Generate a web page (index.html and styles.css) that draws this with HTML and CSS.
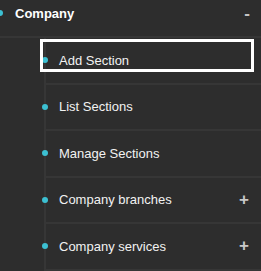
FILE: index.html
```html
<!DOCTYPE html>
<html>
<head>
<meta charset="utf-8">
<link rel="stylesheet" href="styles.css">
</head>
<body>
<nav class="menu">
  <div class="group-head">
    <span class="dot"></span>
    <span class="head-label">Company</span>
    <span class="toggle minus">-</span>
  </div>
  <ul class="sub">
    <li class="item focused"><span class="dot"></span><span class="label">Add Section</span></li>
    <li class="item"><span class="dot"></span><span class="label">List Sections</span></li>
    <li class="item"><span class="dot"></span><span class="label">Manage Sections</span></li>
    <li class="item"><span class="dot"></span><span class="label">Company branches</span><span class="toggle plus">+</span></li>
    <li class="item"><span class="dot"></span><span class="label">Company services</span><span class="toggle plus">+</span></li>
  </ul>
</nav>
</body>
</html>
```
FILE: styles.css
```css
html, body {
  margin: 0;
  padding: 0;
  background: #2d2d2d;
  font-family: "Liberation Sans", Arial, sans-serif;
  overflow: hidden;
}

.menu {
  width: 261px;
}

.dot {
  display: block;
  flex: none;
  width: 6px;
  height: 6px;
  border-radius: 50%;
  background: #3cc0d2;
}

.group-head {
  display: flex;
  align-items: flex-start;
  box-sizing: border-box;
  height: 38px;
  padding-top: 6px;
  border-bottom: 2px solid #363636;
}

.group-head .dot {
  margin-left: -3px;
  margin-top: 4px;
}

.head-label {
  margin-left: 12px;
  font-size: 13px;
  line-height: 15px;
  font-weight: bold;
  color: #ffffff;
}

.toggle {
  margin-left: auto;
  color: #c4c4c4;
  font-weight: bold;
}

.minus {
  margin-right: 11px;
  font-size: 17px;
  line-height: 15px;
}

.sub {
  list-style: none;
  margin: 0 0 0 44px;
  padding: 0;
  border-left: 2px solid #363636;
}

.item {
  position: relative;
  display: flex;
  align-items: center;
  height: 44.5px;
  border-bottom: 2px solid #363636;
}

.item .dot {
  margin-left: -4px;
}

.label {
  margin-left: 11px;
  font-size: 13px;
  color: #f2f2f2;
}

.plus {
  margin-right: 12px;
  font-size: 17px;
  font-weight: bold;
  color: #c8c8c8;
}

.focused::after {
  content: "";
  position: absolute;
  left: -6px;
  top: 1px;
  width: 214px;
  height: 33px;
  box-sizing: border-box;
  border: 3px solid #ffffff;
}
```
